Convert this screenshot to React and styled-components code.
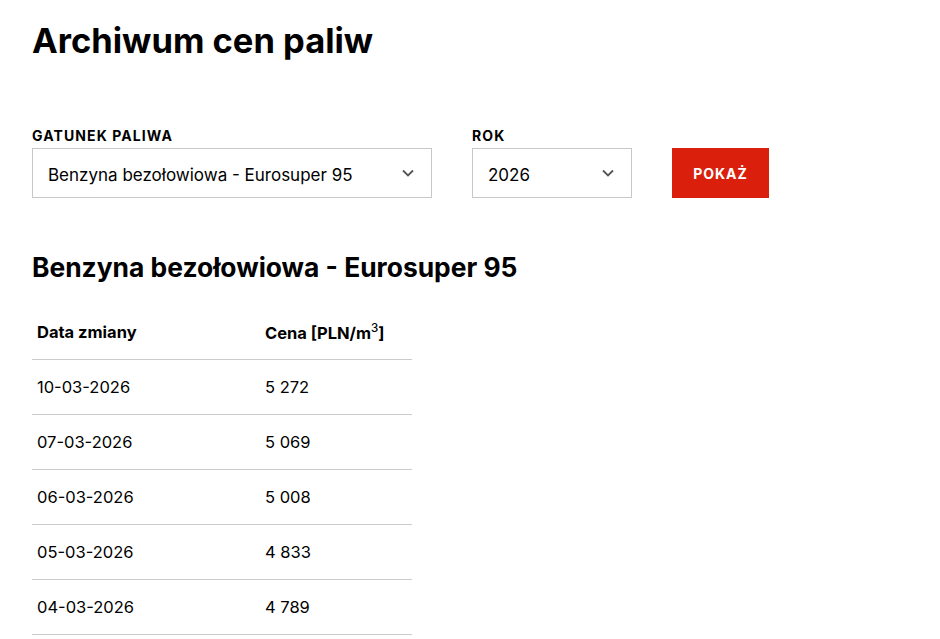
import styled, { createGlobalStyle } from "styled-components";

const GlobalStyle = createGlobalStyle`
    body {
        margin: 0;
        font-family: Inter, Lato, sans-serif;
        color: #000;
        background: #fff;
    }
`

const Page = styled.main`
    padding: 0 32px;
`

const Title = styled.h1`
    margin: 0;
    padding-top: 19px;
    font-size: 34.5px;
    line-height: 44px;
    font-weight: 700;
`

const Filters = styled.form`
    display: flex;
    align-items: flex-end;
    gap: 40px;
    margin-top: 65px;
`

const Field = styled.div`
    display: flex;
    flex-direction: column;
    gap: 4px;
`

const Label = styled.label`
    font-size: 14px;
    line-height: 16px;
    font-weight: 700;
    letter-spacing: 1.1px;
    text-transform: uppercase;
`

const SelectBox = styled.div`
    box-sizing: border-box;
    display: flex;
    align-items: center;
    justify-content: space-between;
    width: ${p => p.$width}px;
    height: 50px;
    padding: 3px 16px 0 15px;
    border: 1px solid #c8c8c8;
    font-size: 17px;

    svg {
        margin-top: -3px;
    }
`

const Button = styled.button`
    height: 50px;
    width: 97px;
    border: none;
    background: #da1f0c;
    color: #fff;
    font-family: inherit;
    font-size: 14px;
    font-weight: 700;
    letter-spacing: 1px;
    text-transform: uppercase;
`

const SubTitle = styled.h2`
    margin: 54px 0 0;
    font-size: 26.4px;
    line-height: 30px;
    font-weight: 700;
`

const Table = styled.table`
    width: 380px;
    margin-top: 23px;
    border-collapse: collapse;
    font-size: 16.5px;
`

const Cell = styled.td`
    height: 54px;
    padding: 0 5px;
    border-bottom: 1px solid #cccccc;
    width: ${p => p.$w || "auto"};
    font-weight: ${p => (p.$head ? 700 : 400)};
    text-align: left;
    vertical-align: middle;
`

const HeadCell = styled(Cell).attrs({ as: "th", $head: true })`
    height: 53px;
    padding-bottom: 1px;

    sup {
        font-size: 0.7em;
        font-weight: 500;
    }
`

const Chevron = () => (
    <svg width="14" height="14" viewBox="0 0 14 14" fill="none">
        <path d="M2 4.5l5 5 5-5" stroke="#555" strokeWidth="1.8" />
    </svg>
)

const rows = [
    ["10-03-2026", "5 272"],
    ["07-03-2026", "5 069"],
    ["06-03-2026", "5 008"],
    ["05-03-2026", "4 833"],
    ["04-03-2026", "4 789"],
]

export default function App() {
    return (
        <Page>
            <GlobalStyle />
            <Title>Archiwum cen paliw</Title>
            <Filters>
                <Field>
                    <Label>Gatunek paliwa</Label>
                    <SelectBox $width={400}>
                        <span>Benzyna bezołowiowa - Eurosuper 95</span>
                        <Chevron />
                    </SelectBox>
                </Field>
                <Field>
                    <Label>Rok</Label>
                    <SelectBox $width={160}>
                        <span>2026</span>
                        <Chevron />
                    </SelectBox>
                </Field>
                <Button type="button">Pokaż</Button>
            </Filters>
            <SubTitle>Benzyna bezołowiowa - Eurosuper 95</SubTitle>
            <Table>
                <thead>
                    <tr>
                        <HeadCell $w="60%">Data zmiany</HeadCell>
                        <HeadCell>Cena [PLN/m<sup>3</sup>]</HeadCell>
                    </tr>
                </thead>
                <tbody>
                    {rows.map(([date, price]) => (
                        <tr key={date}>
                            <Cell>{date}</Cell>
                            <Cell>{price}</Cell>
                        </tr>
                    ))}
                </tbody>
            </Table>
        </Page>
    );
}
